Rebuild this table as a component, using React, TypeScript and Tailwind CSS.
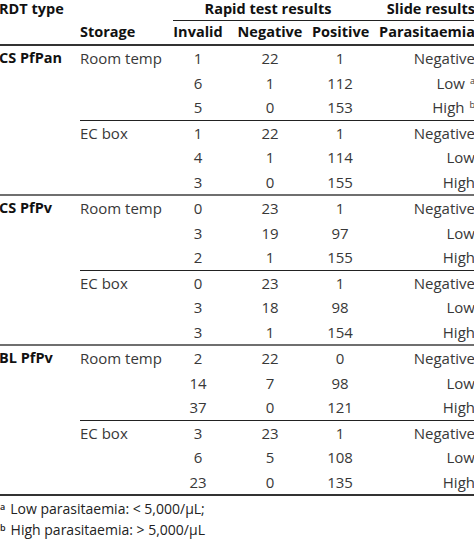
import React from "react";

type Row = { inv: string; neg: string; pos: string; par: string; sup?: string };

const groups: { name: string; sets: { storage: string; rows: Row[] }[] }[] = [
  {
    name: "CS PfPan",
    sets: [
      {
        storage: "Room temp",
        rows: [
          { inv: "1", neg: "22", pos: "1", par: "Negative" },
          { inv: "6", neg: "1", pos: "112", par: "Low", sup: "a" },
          { inv: "5", neg: "0", pos: "153", par: "High", sup: "b" },
        ],
      },
      {
        storage: "EC box",
        rows: [
          { inv: "1", neg: "22", pos: "1", par: "Negative" },
          { inv: "4", neg: "1", pos: "114", par: "Low" },
          { inv: "3", neg: "0", pos: "155", par: "High" },
        ],
      },
    ],
  },
  {
    name: "CS PfPv",
    sets: [
      {
        storage: "Room temp",
        rows: [
          { inv: "0", neg: "23", pos: "1", par: "Negative" },
          { inv: "3", neg: "19", pos: "97", par: "Low" },
          { inv: "2", neg: "1", pos: "155", par: "High" },
        ],
      },
      {
        storage: "EC box",
        rows: [
          { inv: "0", neg: "23", pos: "1", par: "Negative" },
          { inv: "3", neg: "18", pos: "98", par: "Low" },
          { inv: "3", neg: "1", pos: "154", par: "High" },
        ],
      },
    ],
  },
  {
    name: "BL PfPv",
    sets: [
      {
        storage: "Room temp",
        rows: [
          { inv: "2", neg: "22", pos: "0", par: "Negative" },
          { inv: "14", neg: "7", pos: "98", par: "Low" },
          { inv: "37", neg: "0", pos: "121", par: "High" },
        ],
      },
      {
        storage: "EC box",
        rows: [
          { inv: "3", neg: "23", pos: "1", par: "Negative" },
          { inv: "6", neg: "5", pos: "108", par: "Low" },
          { inv: "23", neg: "0", pos: "135", par: "High" },
        ],
      },
    ],
  },
];

const cols = "grid grid-cols-[80px_88px_60px_84px_56px_106px]";

export default function App() {
  return (
    <div className="w-[474px] h-[540px] overflow-hidden bg-white font-['Open_Sans',sans-serif] text-[15px] text-[#383838]">
      {/* header row 1 */}
      <div className={`${cols} h-[20px] items-start font-bold text-[#111] text-[14.5px] leading-[17px]`}>
        <div className="-ml-[1px]">RDT type</div>
        <div />
        <div className="col-span-3 text-center">Rapid test results</div>
        <div className="text-right -mr-[1px]">Slide results</div>
      </div>
      <div className={`${cols} h-0`}>
        <div className="col-start-3 col-span-4 ml-[5px] h-px bg-[#222]" />
      </div>
      {/* header row 2 */}
      <div className={`${cols} h-[26px] items-center font-bold text-[#111] text-[14.5px] border-b-2 border-[#333]`}>
        <div />
        <div>Storage</div>
        <div className="text-center">Invalid</div>
        <div className="text-center">Negative</div>
        <div className="text-center">Positive</div>
        <div className="text-right -mr-[1px]">Parasitaemia</div>
      </div>

      {groups.map((g, gi) => (
        <div
          key={g.name}
          className={`${cols} grid-rows-[repeat(3,24.5px)_1px_repeat(3,24.5px)] border-b-2 ${
            gi === groups.length - 1 ? "border-[#333]" : "border-[#6f6f6f]"
          }`}
        >
          {g.sets.map((s, si) => (
            <React.Fragment key={s.storage}>
              {si === 1 && <div className="col-start-2 col-span-5 bg-[#222]" />}
              {s.rows.map((r, ri) => (
                <React.Fragment key={ri}>
                  <div className="col-start-1 -ml-[1px] flex items-center font-bold text-[14.5px] text-[#111]">
                    {si === 0 && ri === 0 ? g.name : ""}
                  </div>
                  <div className="flex items-center">{ri === 0 ? s.storage : ""}</div>
                  <div className="flex items-center justify-center">{r.inv}</div>
                  <div className="flex items-center justify-center">{r.neg}</div>
                  <div className="flex items-center justify-center">{r.pos}</div>
                  <div className="flex items-center justify-end -mr-[1px]">
                    {r.par}
                    {r.sup && (
                      <sup className="ml-[5px] text-[9px] relative -top-[2px]">{r.sup}</sup>
                    )}
                  </div>
                </React.Fragment>
              ))}
            </React.Fragment>
          ))}
        </div>
      ))}

      <div className="pt-[2px] text-[14px] text-[#222] leading-[21px]">
        <div>
          <sup className="text-[9px] font-semibold mr-[5px]">a</sup>Low parasitaemia: &lt; 5,000/μL;
        </div>
        <div>
          <sup className="text-[9px] font-semibold mr-[5px]">b</sup>High parasitaemia: &gt; 5,000/μL
        </div>
      </div>
    </div>
  );
}
